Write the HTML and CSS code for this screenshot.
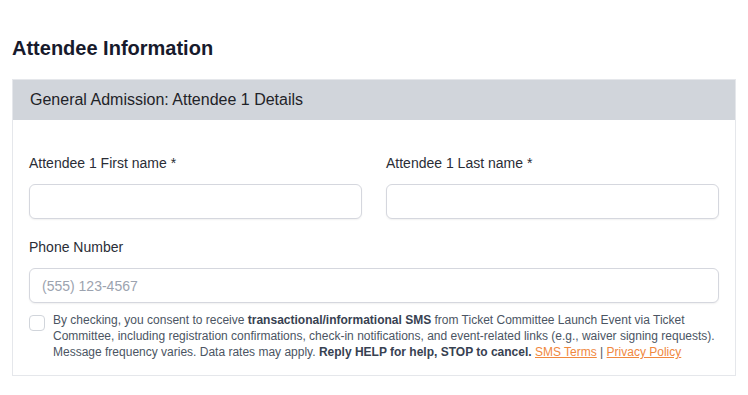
FILE: index.html
```html
<!DOCTYPE html>
<html lang="en">
<head>
    <meta charset="UTF-8">
    <title>Attendee Information</title>
    <link rel="stylesheet" href="styles.css">
</head>
<body>
<div class="page">
    <h2 class="title">Attendee Information</h2>
    <div class="card">
        <div class="card-head">General Admission: Attendee 1 Details</div>
        <div class="card-body">
            <div class="row">
                <div class="field">
                    <label>Attendee 1 First name *</label>
                    <input type="text">
                </div>
                <div class="field">
                    <label>Attendee 1 Last name *</label>
                    <input type="text">
                </div>
            </div>
            <div class="field phone">
                <label>Phone Number</label>
                <input type="text" placeholder="(555) 123-4567">
            </div>
            <div class="consent">
                <span class="check"></span>
                <p>By checking, you consent to receive <b>transactional/informational SMS</b> from Ticket Committee Launch Event via Ticket Committee, including registration confirmations, check-in notifications, and event-related links (e.g., waiver signing requests). Message frequency varies. Data rates may apply. <b>Reply HELP for help, STOP to cancel.</b> <a href="#">SMS Terms</a> | <a href="#">Privacy Policy</a></p>
            </div>
        </div>
    </div>
</div>
</body>
</html>
```

FILE: styles.css
```css
*{
    margin: 0;
    padding: 0;
    box-sizing: border-box;
}
body{
    font-family: "Liberation Sans", Arial, sans-serif;
    background: #fff;
    color: #1f2937;
}
.page{
    padding: 34px 12px 0 12px;
}
.title{
    font-size: 20px;
    line-height: 28px;
    font-weight: bold;
    color: #171a2c;
    margin-bottom: 17px;
}
.card{
    border: 1px solid #e5e7eb;
}
.card-head{
    background-color: #d1d5db;
    height: 40px;
    line-height: 40px;
    padding: 0 17px;
    font-size: 16px;
    color: #1f2328;
}
.card-body{
    padding: 33px 16px 15px 16px;
}
.row{
    display: grid;
    grid-template-columns: 1fr 1fr;
    gap: 24px;
}
.field label{
    display: block;
    font-size: 14px;
    line-height: 20px;
    color: #2a2d36;
    margin-bottom: 11px;
}
.field input{
    display: block;
    width: 100%;
    height: 35px;
    border: 1px solid #d5d7de;
    border-radius: 6px;
    box-shadow: 0 1px 2px rgba(0,0,0,0.06);
    padding: 0 12px;
    font-family: inherit;
    font-size: 14px;
    color: #1f2937;
    background: #fff;
}
.field input::placeholder{
    color: #9ca3af;
}
.phone{
    margin-top: 18px;
}
.consent{
    display: flex;
    gap: 8px;
    margin-top: 9px;
}
.check{
    flex: none;
    width: 16px;
    height: 16px;
    margin-top: 3px;
    border: 1px solid #d1d5db;
    border-radius: 4px;
    background: #fff;
}
.consent p{
    font-size: 12px;
    line-height: 16px;
    color: #4b5563;
}
.consent b{
    color: #374151;
}
.consent a{
    color: #f0883e;
    text-decoration: underline;
}
```
